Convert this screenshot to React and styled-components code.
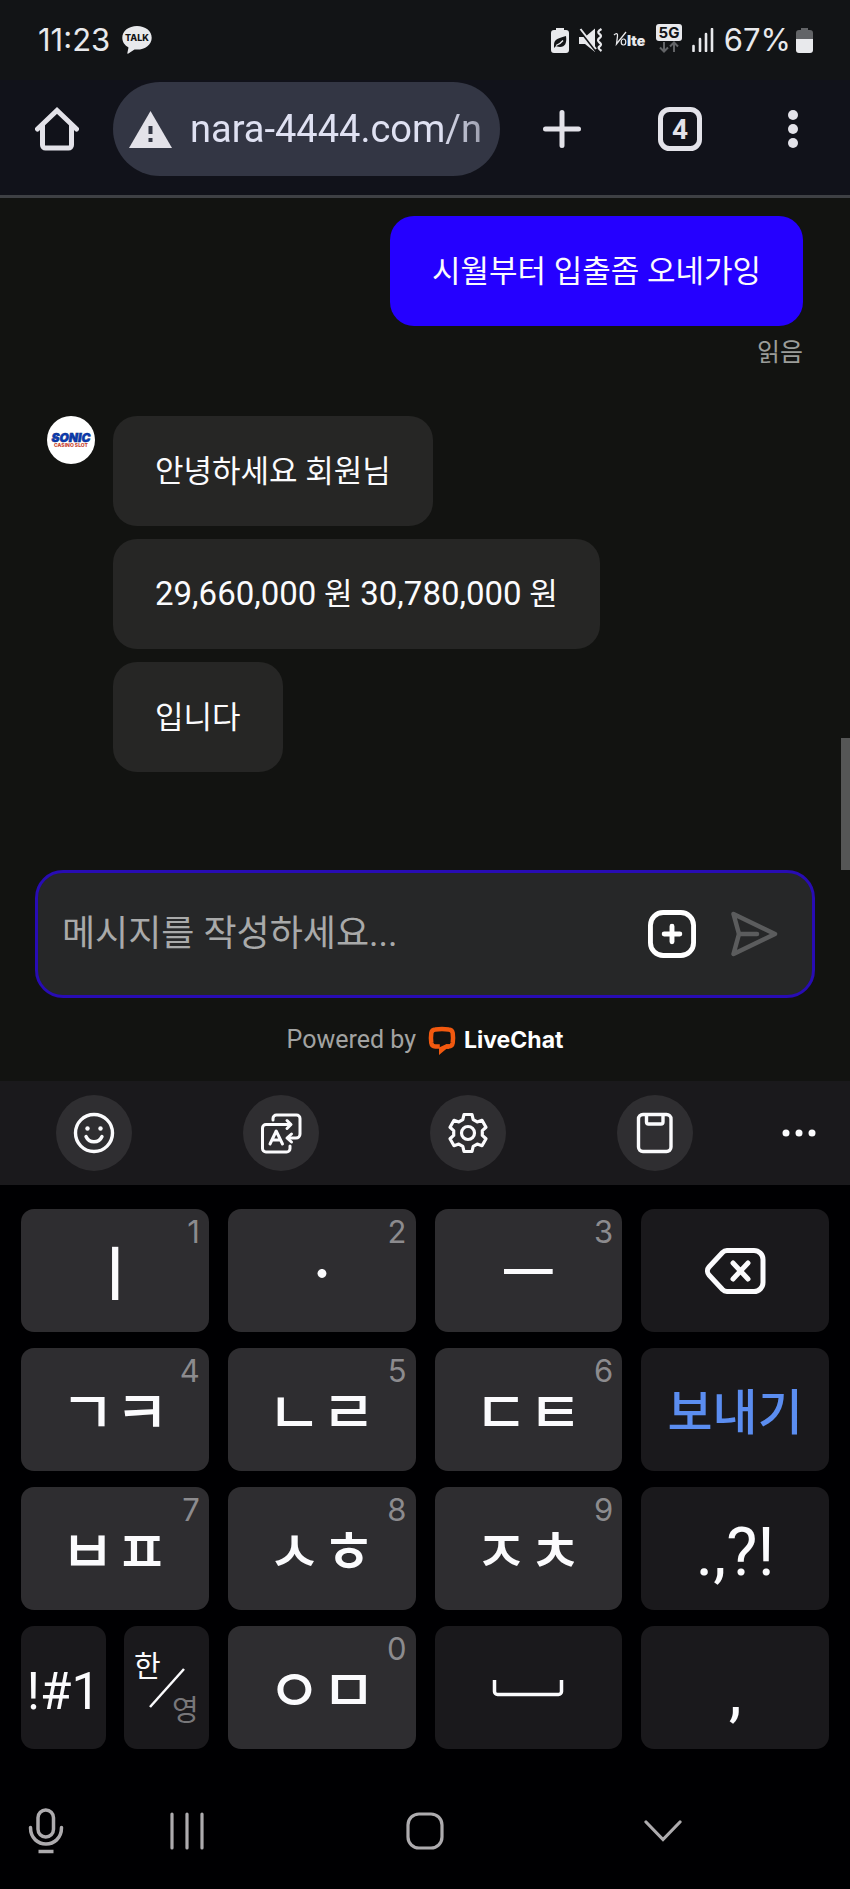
import React, { useState } from "react";
import styled, { createGlobalStyle } from "styled-components";

const GlobalStyle = createGlobalStyle`
  * {
    box-sizing: border-box;
  }
  body {
    margin: 0;
    background: #000002;
    color: #fbfbfd;
    font-family: Roboto, "Noto Sans CJK KR", sans-serif;
  }
  button,
  input {
    margin: 0;
    padding: 0;
    border: 0;
    background: none;
    color: inherit;
    font-family: inherit;
  }
  svg {
    display: block;
    flex: none;
  }
`;

const Screen = styled.div`
  display: flex;
  flex-direction: column;
`;

/* status bar */

const StatusBar = styled.header`
  display: flex;
  align-items: center;
  justify-content: space-between;
  height: 80px;
  padding: 0 37px 0 38px;
  background: #121416;
  color: #e8e9ec;
  font-family: Inter, sans-serif;
  font-size: 31px;
  line-height: 36px;
`;

const StatusGroup = styled.div`
  display: flex;
  align-items: center;
  gap: ${({ $gap }) => $gap}px;
`;

/* browser bar */

const BrowserBar = styled.nav`
  display: grid;
  grid-template-columns: 113px 1fr 124px 112px 114px;
  align-items: center;
  height: 118px;
  padding-bottom: 17px;
  border-bottom: 3px solid #3e4044;
  background: #11121a;
  color: #e3e2e9;
`;

const BarButton = styled.button`
  display: flex;
  align-items: center;
  justify-content: center;
  height: 94px;
`;

const Address = styled.label`
  display: flex;
  align-items: center;
  gap: 18px;
  min-width: 0;
  height: 94px;
  padding: 0 16px;
  border-radius: 47px;
  background: #333644;
`;

const AddressInput = styled.input`
  flex: 1;
  min-width: 0;
  color: #dfe1f2;
  font-size: 38px;
  line-height: 48px;
  outline: none;
  mask-image: linear-gradient(to right, #000 85%, rgba(0, 0, 0, 0.6));
`;

/* chat */

const Chat = styled.main`
  position: relative;
  padding: 18px 35px 24px;
  background: #121311;
`;

const Messages = styled.section`
  display: flex;
  flex-direction: column;
  padding: 0 12px;
`;

const Sent = styled.div`
  display: flex;
  flex-direction: column;
  align-items: flex-end;
`;

const Bubble = styled.p`
  margin: 0;
  padding: 33px 42px 31px;
  border-radius: 24px;
  background: ${({ $mine }) => ($mine ? "#2500ff" : "#262625")};
  font-size: 31px;
  line-height: 46px;
`;

const Amount = styled.span`
  font-size: 33px;
  line-height: 36px;
`;

const ReadMark = styled.span`
  margin-top: 10px;
  color: #9b9d9a;
  font-size: 25px;
  line-height: 34px;
`;

const Received = styled.div`
  display: flex;
  gap: 18px;
  margin: 46px 0 98px;
`;

const BubbleList = styled.div`
  display: flex;
  flex-direction: column;
  align-items: flex-start;
  gap: 13px;
`;

const Composer = styled.form`
  display: flex;
  align-items: center;
  gap: 34px;
  height: 128px;
  padding: 0 34px 0 24px;
  border: 3px solid #280cb4;
  border-radius: 28px;
  background: #262728;
`;

const MessageInput = styled.input`
  flex: 1;
  min-width: 0;
  font-size: 36px;
  line-height: 52px;
  outline: none;

  &::placeholder {
    color: #a9aaaa;
    opacity: 1;
  }
`;

const PoweredBy = styled.p`
  display: flex;
  align-items: center;
  justify-content: center;
  gap: 12px;
  margin: 25px 0 0;
  color: #a2a3a2;
  font-size: 25px;
  line-height: 34px;
`;

const Brand = styled.a`
  display: flex;
  align-items: center;
  gap: 8px;
  color: #fff;
  font-family: Inter, sans-serif;
  font-size: 23px;
  font-weight: 700;
  text-decoration: none;
`;

const ScrollThumb = styled.div`
  position: absolute;
  top: 540px;
  right: 0;
  width: 9px;
  height: 132px;
  background: #555656;
`;

/* keyboard */

const ToolRow = styled.div`
  display: grid;
  grid-template-columns: repeat(4, 22%) 1fr;
  align-items: center;
  justify-items: center;
  height: 104px;
  background: #1a191c;
`;

const ToolButton = styled.button`
  display: flex;
  align-items: center;
  justify-content: center;
  width: 76px;
  height: 76px;
  border-radius: 50%;
  background: ${({ $plain }) => ($plain ? "none" : "#2f2e31")};
`;

const Keys = styled.div`
  display: grid;
  grid-template-columns: repeat(4, 1fr);
  gap: 16px 19px;
  padding: 24px 21px 0;
`;

const HalfKeys = styled.div`
  display: grid;
  grid-template-columns: 1fr 1fr;
  gap: 18px;
`;

const Key = styled.button`
  position: relative;
  display: flex;
  align-items: center;
  justify-content: center;
  min-width: 0;
  height: 123px;
  border-radius: 13px;
  background: ${({ $dark }) => ($dark ? "#1a191c" : "#2e2d30")};
`;

const KeyLabel = styled.span`
  padding-top: 8px;
  color: ${({ $accent }) => ($accent ? "#5b8df0" : "#fbfbfd")};
  font-size: ${({ $size }) => $size}px;
  font-weight: ${({ $weight }) => $weight || 400};
  line-height: 80px;
  white-space: nowrap;
`;

const Hint = styled.span`
  position: absolute;
  top: 5px;
  right: 9px;
  color: #8c8b8e;
  font-family: Inter, sans-serif;
  font-size: 31px;
  font-weight: 400;
  line-height: 36px;
`;

const LangKey = styled(Key)`
  flex-direction: column;
  justify-content: space-between;
  padding: 20px 10px 17px;
  font-size: 29px;
  line-height: 42px;
`;

const Lang = styled.span`
  align-self: ${({ $off }) => ($off ? "flex-end" : "flex-start")};
  color: ${({ $off }) => ($off ? "#78777a" : "#fbfbfd")};
`;

const LangSlash = styled.svg`
  position: absolute;
  top: 42px;
  left: 25px;
`;

/* system navigation */

const SystemNav = styled.nav`
  display: grid;
  grid-template-columns: 8% repeat(3, 28%) 8%;
  align-items: center;
  height: 140px;
  padding-top: 24px;
  color: #adabae;
`;

const NavButton = styled.button`
  display: flex;
  justify-content: center;
`;

const MicButton = styled(NavButton)`
  justify-content: flex-end;
  padding-right: 4px;
`;

const TalkIcon = () => (
  <svg width="30" height="28" viewBox="0 0 30 28">
    <path
      d="M15 0C6.700 0 .3 5 .3 11.700c0 4.300 2.500 7.600 6.200 9.700L5.300 27.300c0 .4.400.6.700.4l6.500-4.200c.8.100 1.700.1 2.500.1 8.300 0 14.700-5.200 14.700-11.900S23.300 0 15 0z"
      fill="#e8e9ec"
    />
    <text
      x="15"
      y="15"
      textAnchor="middle"
      fontFamily="Inter, sans-serif"
      fontSize="9"
      fontWeight="800"
      fill="#121416"
    >
      TALK
    </text>
  </svg>
);

const PowerSaveIcon = () => (
  <svg width="18" height="25" viewBox="0 0 18 25">
    <path
      d="M5 0h8v2h2a3 3 0 0 1 3 3v17a3 3 0 0 1-3 3H3a3 3 0 0 1-3-3V5a3 3 0 0 1 3-3h2z"
      fill="currentColor"
    />
    <path d="M15 8c1 7-1 11-6 11-2 0-4-1-4-1l-2 2v-3c0-6 5-7 12-9z" fill="#121416" />
    <path d="M5 17.500c3-1 5-2.500 7-5" stroke="#e8e9ec" strokeWidth="1.300" fill="none" />
  </svg>
);

const MuteIcon = () => (
  <svg width="24" height="25" viewBox="0 0 24 25">
    <path d="M0 9h6l10-8.500v23.500L6 16H0z" fill="currentColor" />
    <path d="M0 1l17 22" stroke="#121416" strokeWidth="2.600" />
    <path d="M1.500 1l15.500 20" stroke="currentColor" strokeWidth="2" />
    <path
      d="M22.500 1c-4 2.500-4 3.500-2 5s2 2.500 0 4-2 3 0 4.500 2 2.500 0 4 0 3 2 4.500"
      fill="none"
      stroke="currentColor"
      strokeWidth="2.200"
    />
  </svg>
);

const VolteIcon = () => (
  <svg width="33" height="18" viewBox="0 0 33 18">
    <path d="M1 4c2-2 4-2 3.500 1L3.500 13 13 1" fill="none" stroke="currentColor" strokeWidth="1.300" />
    <ellipse cx="10.500" cy="11" rx="2.300" ry="3" fill="none" stroke="currentColor" strokeWidth="1.200" />
    <text x="14" y="15" fontFamily="Inter, sans-serif" fontSize="14" fontWeight="900" fill="currentColor">
      lte
    </text>
  </svg>
);

const FiveGIcon = () => (
  <svg width="26" height="32" viewBox="0 0 26 32">
    <rect width="26" height="17" rx="3" fill="currentColor" />
    <text
      x="13"
      y="14"
      textAnchor="middle"
      fontFamily="Inter, sans-serif"
      fontSize="15"
      fontWeight="700"
      fill="#121416"
    >
      5G
    </text>
    <path d="M8 18v9M4 23.500l4 4 4-4M18 28v-9M14 22.500l4-4 4 4" fill="none" stroke="#626467" strokeWidth="2" />
  </svg>
);

const SignalIcon = () => (
  <svg width="22" height="24" viewBox="0 0 22 24">
    <path d="M1.500 18v5M8 11v12M14 6v17M20 1v22" stroke="currentColor" strokeWidth="2.600" strokeLinecap="round" />
  </svg>
);

const BatteryIcon = () => (
  <svg width="17" height="25" viewBox="0 0 17 25">
    <path d="M5 0h7v2h2a3 3 0 0 1 3 3v6H0V5a3 3 0 0 1 3-3h2z" fill="#626467" />
    <path d="M0 11h17v11a3 3 0 0 1-3 3H3a3 3 0 0 1-3-3z" fill="currentColor" />
  </svg>
);

const HomeIcon = () => (
  <svg width="44" height="44" viewBox="0 0 44 44" fill="none" stroke="currentColor" strokeWidth="5">
    <path d="M2.500 22L22 3.500 41.500 22" strokeLinecap="round" />
    <path d="M7.500 18v20a3 3 0 0 0 3 3h23a3 3 0 0 0 3-3V18" />
  </svg>
);

const WarningIcon = () => (
  <svg width="43" height="37" viewBox="0 0 43 37">
    <path d="M21.500 0L43 37H0z" fill="#e3e2e9" />
    <path d="M19.500 15h4v8h-4zM19.500 27h4v4h-4z" fill="#333644" />
  </svg>
);

const PlusIcon = () => (
  <svg width="38" height="38" viewBox="0 0 38 38">
    <path d="M19 2.500v33M2.500 19h33" stroke="currentColor" strokeWidth="5" strokeLinecap="round" />
  </svg>
);

const TabsIcon = () => (
  <svg width="44" height="44" viewBox="0 0 44 44">
    <rect x="2.500" y="2.500" width="39" height="39" rx="9" fill="none" stroke="currentColor" strokeWidth="5" />
    <text
      x="22"
      y="32"
      textAnchor="middle"
      fontFamily="Roboto, sans-serif"
      fontSize="28"
      fontWeight="700"
      fill="currentColor"
    >
      4
    </text>
  </svg>
);

const MoreIcon = () => (
  <svg width="10" height="38" viewBox="0 0 10 38" fill="currentColor">
    <circle cx="5" cy="5" r="5" />
    <circle cx="5" cy="19" r="5" />
    <circle cx="5" cy="33" r="5" />
  </svg>
);

const Avatar = () => (
  <svg width="48" height="48" viewBox="0 0 48 48" role="img" aria-label="SONIC">
    <circle cx="24" cy="24" r="24" fill="#fff" />
    <text
      x="24"
      y="26"
      textAnchor="middle"
      fontFamily="Inter, sans-serif"
      fontSize="12"
      fontWeight="900"
      fontStyle="italic"
      fill="#0a3cb4"
      stroke="#0a2a80"
      strokeWidth="0.500"
    >
      SONIC
    </text>
    <text
      x="24"
      y="31"
      textAnchor="middle"
      fontFamily="Inter, sans-serif"
      fontSize="5"
      fontWeight="800"
      fill="#c8402c"
    >
      CASINO SLOT
    </text>
  </svg>
);

const AttachIcon = () => (
  <svg width="48" height="48" viewBox="0 0 49 49" fill="none" stroke="#fff" strokeWidth="5">
    <rect x="2.500" y="2.500" width="44" height="44" rx="13" />
    <path d="M24.500 16.500v16M16.500 24.500h16" strokeLinecap="round" />
  </svg>
);

const SendIcon = () => (
  <svg
    width="48"
    height="46"
    viewBox="0 0 48 46"
    fill="none"
    stroke="#5b5c5d"
    strokeWidth="4.500"
    strokeLinejoin="round"
  >
    <path d="M3.500 3L45 23 3.500 43 9 23z" />
    <path d="M9 23h18" strokeLinecap="round" />
  </svg>
);

const LiveChatIcon = () => (
  <svg width="28" height="29" viewBox="0 0 28 29">
    <path
      d="M18 20.500h2.500a4.200 4.200 0 0 0 4.200-3.500c.5-3.500.5-6.500 0-10a4.200 4.200 0 0 0-4-3.600c-4.500-.5-9-.5-13.400 0a4.200 4.200 0 0 0-4 3.600c-.5 3.500-.5 6.500 0 10a4.200 4.200 0 0 0 4 3.500h4.500"
      fill="none"
      stroke="#f2590f"
      strokeWidth="4.500"
    />
    <path d="M11 29v-7.500l7-3.300h3v4.500h-2.500z" fill="#f2590f" />
  </svg>
);

const toolIconProps = {
  width: 42,
  height: 42,
  viewBox: "0 0 42 42",
  fill: "none",
  stroke: "currentColor",
  strokeWidth: 3.4,
  strokeLinecap: "round",
  strokeLinejoin: "round",
};

const SmileIcon = () => (
  <svg {...toolIconProps}>
    <circle cx="21" cy="21" r="18.500" />
    <path d="M13 24.500c3 7 13 7 16 0" />
    <circle cx="14.500" cy="16.500" r="2.200" fill="currentColor" stroke="none" />
    <circle cx="27.500" cy="16.500" r="2.200" fill="currentColor" stroke="none" />
  </svg>
);

const TranslateIcon = () => (
  <svg {...toolIconProps} strokeWidth="3">
    <path d="M13 8V6.500A3.500 3.500 0 0 1 16.500 3h20A3.500 3.500 0 0 1 40 6.500V22a4 4 0 0 1-4 4h-8" />
    <path d="M31.500 22l-4.500 4 4.500 4" />
    <path d="M30 12.500H6A3.500 3.500 0 0 0 2.500 16v20.500A3.500 3.500 0 0 0 6 40h20.500a3.500 3.500 0 0 0 3.500-3.500V34" />
    <path d="M27 8.500l4 4-4 4" />
    <path d="M10 32l6.200-13L22.500 32M12.500 28h7.500" />
  </svg>
);

const GearIcon = () => (
  <svg {...toolIconProps} strokeWidth="3.200">
    <path d="M17 2.500h8l1.200 5.200 4 2.200 4.800-1.600 4 6.900-3.700 3.400v4.800l3.700 3.400-4 6.900-4.800-1.600-4 2.200-1.200 5.200h-8l-1.200-5.200-4-2.200L7 33.700l-4-6.900 3.700-3.400v-4.800L3 15.200l4-6.900 4.800 1.600 4-2.200z" />
    <circle cx="21" cy="21" r="6.500" />
  </svg>
);

const ClipboardIcon = () => (
  <svg {...toolIconProps}>
    <rect x="4.500" y="2.500" width="32.500" height="37" rx="4.500" />
    <path d="M12.500 3v7a2 2 0 0 0 2 2h12.500a2 2 0 0 0 2-2V3" />
  </svg>
);

const DotsIcon = () => (
  <svg width="34" height="8" viewBox="0 0 34 8" fill="currentColor">
    <circle cx="4" cy="4" r="3.500" />
    <circle cx="17" cy="4" r="3.500" />
    <circle cx="30" cy="4" r="3.500" />
  </svg>
);

const BackspaceIcon = () => (
  <svg
    width="61"
    height="46"
    viewBox="0 0 61 46"
    fill="none"
    stroke="currentColor"
    strokeWidth="5"
    strokeLinecap="round"
    strokeLinejoin="round"
  >
    <path d="M22 2.500h27a9 9 0 0 1 9 9v23a9 9 0 0 1-9 9H22a7 7 0 0 1-4.500-2L4 27a6 6 0 0 1 0-8L17.500 4.500a7 7 0 0 1 4.500-2z" />
    <path d="M28 15l15 16M43 15L28 31" />
  </svg>
);

const SpaceIcon = () => (
  <svg width="72" height="18" viewBox="0 0 72 18">
    <path
      d="M2.500 1v11.500a3 3 0 0 0 3 3h61a3 3 0 0 0 3-3V1"
      fill="none"
      stroke="currentColor"
      strokeWidth="3.500"
    />
  </svg>
);

const MicIcon = () => (
  <svg width="36" height="46" viewBox="0 0 36 46" fill="none" stroke="currentColor" strokeWidth="3.500">
    <rect x="10" y="2" width="15.500" height="27" rx="7.700" />
    <path d="M2.500 19.500c0 22 31 22 31 0" strokeLinecap="round" />
    <path d="M10.500 43.500h15" />
  </svg>
);

const RecentsIcon = () => (
  <svg width="34" height="38" viewBox="0 0 34 38" stroke="currentColor" strokeWidth="3.200" strokeLinecap="round">
    <path d="M2 2v34M17 2v34M32 2v34" />
  </svg>
);

const NavHomeIcon = () => (
  <svg width="38" height="38" viewBox="0 0 38 38">
    <rect x="2" y="2" width="34" height="34" rx="11" fill="none" stroke="currentColor" strokeWidth="3.200" />
  </svg>
);

const NavDownIcon = () => (
  <svg width="38" height="22" viewBox="0 0 38 22">
    <path d="M2 2l17 17.500L36 2" fill="none" stroke="currentColor" strokeWidth="3.200" strokeLinecap="round" />
  </svg>
);

const letterRows = [
  [["ㅣ", 1], ["ㆍ", 2], ["ㅡ", 3]],
  [["ㄱㅋ", 4], ["ㄴㄹ", 5], ["ㄷㅌ", 6]],
  [["ㅂㅍ", 7], ["ㅅㅎ", 8], ["ㅈㅊ", 9]],
];

const LetterKey = ({ label, hint }) => (
  <Key type="button">
    <KeyLabel $size={59} $weight={500}>
      {label}
    </KeyLabel>
    <Hint>{hint}</Hint>
  </Key>
);

const App = () => {
  const [message, setMessage] = useState("");

  const sideKeys = [
    <Key type="button" $dark key="del" aria-label="삭제">
      <BackspaceIcon />
    </Key>,
    <Key type="button" $dark key="send">
      <KeyLabel $accent $size={49} $weight={500}>
        보내기
      </KeyLabel>
    </Key>,
    <Key type="button" $dark key="marks">
      <KeyLabel $size={66}>.,?!</KeyLabel>
    </Key>,
  ];

  return (
    <Screen>
      <GlobalStyle />
      <StatusBar>
        <StatusGroup $gap={12}>
          <span>11:23</span>
          <TalkIcon />
        </StatusGroup>
        <StatusGroup $gap={10}>
          <PowerSaveIcon />
          <MuteIcon />
          <VolteIcon />
          <FiveGIcon />
          <SignalIcon />
          <StatusGroup $gap={5}>
            <span>67%</span>
            <BatteryIcon />
          </StatusGroup>
        </StatusGroup>
      </StatusBar>

      <BrowserBar>
        <BarButton aria-label="홈">
          <HomeIcon />
        </BarButton>
        <Address>
          <WarningIcon />
          <AddressInput defaultValue="nara-4444.com/n" aria-label="주소" />
        </Address>
        <BarButton aria-label="새 탭">
          <PlusIcon />
        </BarButton>
        <BarButton aria-label="탭 4개">
          <TabsIcon />
        </BarButton>
        <BarButton aria-label="메뉴">
          <MoreIcon />
        </BarButton>
      </BrowserBar>

      <Chat>
        <Messages>
          <Sent>
            <Bubble $mine>시월부터 입출좀 오네가잉</Bubble>
            <ReadMark>읽음</ReadMark>
          </Sent>
          <Received>
            <Avatar />
            <BubbleList>
              <Bubble>안녕하세요 회원님</Bubble>
              <Bubble>
                <Amount>29,660,000</Amount> 원 <Amount>30,780,000</Amount> 원
              </Bubble>
              <Bubble>입니다</Bubble>
            </BubbleList>
          </Received>
        </Messages>
        <Composer onSubmit={(e) => e.preventDefault()}>
          <MessageInput
            value={message}
            onChange={(e) => setMessage(e.target.value)}
            placeholder="메시지를 작성하세요..."
            aria-label="메시지"
          />
          <button type="button" aria-label="첨부">
            <AttachIcon />
          </button>
          <button type="submit" aria-label="전송">
            <SendIcon />
          </button>
        </Composer>
        <PoweredBy>
          Powered by
          <Brand href="#livechat">
            <LiveChatIcon />
            LiveChat
          </Brand>
        </PoweredBy>
        <ScrollThumb />
      </Chat>

      <ToolRow>
        <ToolButton aria-label="이모티콘">
          <SmileIcon />
        </ToolButton>
        <ToolButton aria-label="번역">
          <TranslateIcon />
        </ToolButton>
        <ToolButton aria-label="설정">
          <GearIcon />
        </ToolButton>
        <ToolButton aria-label="클립보드">
          <ClipboardIcon />
        </ToolButton>
        <ToolButton $plain aria-label="더보기">
          <DotsIcon />
        </ToolButton>
      </ToolRow>

      <Keys>
        {letterRows.map((row, i) => (
          <React.Fragment key={i}>
            {row.map(([label, hint]) => (
              <LetterKey key={hint} label={label} hint={hint} />
            ))}
            {sideKeys[i]}
          </React.Fragment>
        ))}
        <HalfKeys>
          <Key type="button" $dark>
            <KeyLabel $size={51}>!#1</KeyLabel>
          </Key>
          <LangKey type="button" $dark>
            <Lang>한</Lang>
            <LangSlash width="36" height="40" viewBox="0 0 36 40">
              <path d="M1 39L35 1" stroke="#fbfbfd" strokeWidth="2.500" />
            </LangSlash>
            <Lang $off>영</Lang>
          </LangKey>
        </HalfKeys>
        <LetterKey label="ㅇㅁ" hint={0} />
        <Key type="button" $dark aria-label="스페이스">
          <SpaceIcon />
        </Key>
        <Key type="button" $dark>
          <KeyLabel $size={66}>,</KeyLabel>
        </Key>
      </Keys>

      <SystemNav>
        <MicButton aria-label="음성 입력">
          <MicIcon />
        </MicButton>
        <NavButton aria-label="최근 앱">
          <RecentsIcon />
        </NavButton>
        <NavButton aria-label="홈 화면">
          <NavHomeIcon />
        </NavButton>
        <NavButton aria-label="키보드 닫기">
          <NavDownIcon />
        </NavButton>
      </SystemNav>
    </Screen>
  );
};

export default App;
